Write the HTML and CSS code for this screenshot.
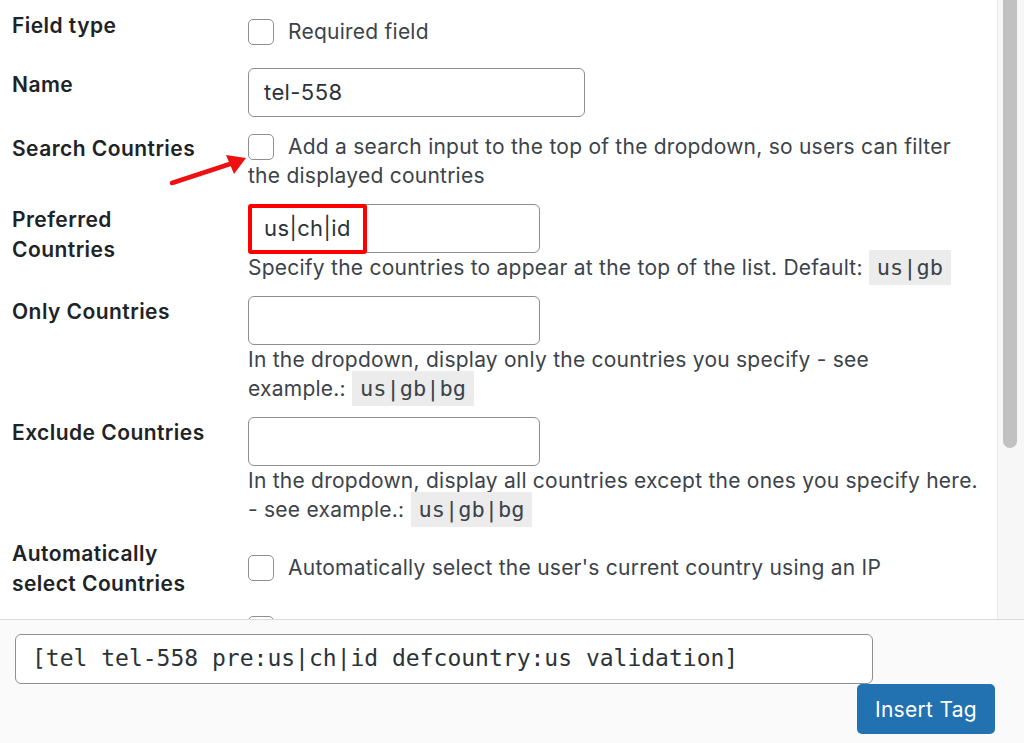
FILE: index.html
```html
<!DOCTYPE html>
<html lang="en">
<head>
<meta charset="utf-8">
<title>Tag generator: tel</title>
<link rel="stylesheet" href="styles.css">
</head>
<body>
<div class="dialog">
  <div class="body">
    <div class="content">
      <div class="row row-first">
        <div class="label">Field type</div>
        <div class="field pad-6"><span class="cb"></span>Required field</div>
      </div>
      <div class="row">
        <div class="label pad-1">Name</div>
        <div class="field"><div class="input wide">tel-558</div></div>
      </div>
      <div class="row">
        <div class="label pad-2">Search Countries</div>
        <div class="field pad-1"><span class="cb"></span>Add a search input to the top of the dropdown, so users can filter<br>the displayed countries</div>
      </div>
      <div class="row">
        <div class="label">Preferred<br>Countries</div>
        <div class="field">
          <div class="input-wrap">
            <div class="input">us|ch|id</div>
            <div class="highlight"></div>
          </div>
          <div class="desc">Specify the countries to appear at the top of the list. Default: <code>us|gb</code></div>
        </div>
      </div>
      <div class="row">
        <div class="label">Only Countries</div>
        <div class="field">
          <div class="input"></div>
          <div class="desc">In the dropdown, display only the countries you specify - see<br>example.: <code>us|gb|bg</code></div>
        </div>
      </div>
      <div class="row">
        <div class="label">Exclude Countries</div>
        <div class="field">
          <div class="input"></div>
          <div class="desc">In the dropdown, display all countries except the ones you specify here.<br>- see example.: <code>us|gb|bg</code></div>
        </div>
      </div>
      <div class="row">
        <div class="label">Automatically<br>select Countries</div>
        <div class="field pad-14"><span class="cb"></span>Automatically select the user's current country using an IP</div>
      </div>
      <div class="row row-last">
        <div class="label">Validation</div>
        <div class="field"><span class="cb"></span>Validate the phone number format</div>
      </div>
    </div>
    <div class="scrollbar"><div class="thumb"></div></div>
    <svg class="arrow" width="90" height="40" viewBox="0 0 90 40" aria-hidden="true">
      <line x1="4" y1="33" x2="62" y2="14" stroke="#ee1111" stroke-width="4.5" stroke-linecap="round"/>
      <polygon points="78,8 58,5 66,24" fill="#ee1111"/>
    </svg>
  </div>
  <div class="footer">
    <div class="tag">[tel tel-558 pre:us|ch|id defcountry:us validation]</div>
    <div class="actions"><button class="btn">Insert Tag</button></div>
  </div>
</div>
</body>
</html>
```
FILE: styles.css
```css
* { box-sizing: border-box; }
html, body { margin: 0; padding: 0; background: #fff; }
body {
  font-family: Inter, "Noto Sans", sans-serif;
  color: #3c434a;
}
.dialog {
  width: 1024px;
  height: 743px;
  display: flex;
  flex-direction: column;
  overflow: hidden;
}
.body {
  height: 619px;
  flex: none;
  display: flex;
  overflow: hidden;
  position: relative;
}
.content {
  flex: 1;
  padding-top: 10px;
  display: flex;
  flex-direction: column;
  gap: 14px;
}
.row {
  display: grid;
  grid-template-columns: 248px 1fr;
  align-items: start;
}
.row-first { padding-bottom: 8px; }
.row-last { padding-top: 1px; }
.label {
  padding-left: 12px;
  margin-top: 1px;
  font-size: 21px;
  font-weight: 600;
  letter-spacing: 0.45px;
  line-height: 30px;
  color: #1d2327;
  white-space: nowrap;
}
.field {
  font-size: 21px;
  letter-spacing: 0.24px;
  line-height: 29px;
  color: #3c434a;
  white-space: nowrap;
}
.pad-1 { padding-top: 1px; }
.pad-2 { padding-top: 2px; }
.pad-6 { padding-top: 7px; }
.pad-14 { padding-top: 15px; }
.cb {
  display: inline-block;
  width: 26px;
  height: 26px;
  border: 1.5px solid #8c8f94;
  border-radius: 5px;
  background: #fff;
  vertical-align: top;
  margin-top: 2px;
  margin-right: 14px;
}
.input {
  width: 292px;
  height: 49px;
  border: 1.5px solid #8c8f94;
  border-radius: 6px;
  background: #fff;
  padding: 0 15px;
  font-size: 22px;
  letter-spacing: 0.4px;
  line-height: 46px;
  color: #2c3338;
}
.input.wide { width: 337px; }
.input-wrap { position: relative; width: 292px; }
.highlight {
  position: absolute;
  left: 0;
  top: 0;
  width: 119px;
  height: 50px;
  border: 4px solid #f00;
  border-radius: 3px;
}
.desc { line-height: 29px; }
code {
  font-family: "DejaVu Sans Mono", "Liberation Mono", monospace;
  font-size: 22px;
  letter-spacing: 0;
  background: #ececec;
  padding: 5px 8px 5px;
  color: #3c434a;
}
.scrollbar {
  width: 27px;
  flex: none;
  background: #f7f7f7;
  border-left: 1px solid #ececec;
  padding-left: 5px;
}
.thumb {
  width: 14px;
  height: 448px;
  background: #c1c1c1;
  border-radius: 0 0 7px 7px;
}
.arrow {
  position: absolute;
  left: 168px;
  top: 150px;
}
.footer {
  flex: 1;
  background: #fafafa;
  border-top: 1px solid #dcdcde;
  padding: 14px 29px 0 15px;
  display: flex;
  flex-direction: column;
}
.tag {
  width: 858px;
  height: 50px;
  background: #fff;
  border: 1.5px solid #8c8f94;
  border-radius: 6px;
  padding: 0 16px;
  font-family: "DejaVu Sans Mono", "Liberation Mono", monospace;
  font-size: 23px;
  line-height: 47px;
  color: #2c3338;
  white-space: nowrap;
}
.actions {
  display: flex;
  justify-content: flex-end;
}
.btn {
  margin-top: 0;
  width: 138px;
  height: 50px;
  background: #2271b1;
  color: #fff;
  border: none;
  border-radius: 5px;
  font-family: Inter, "Noto Sans", sans-serif;
  font-size: 21px;
  letter-spacing: 0.3px;
}
```
